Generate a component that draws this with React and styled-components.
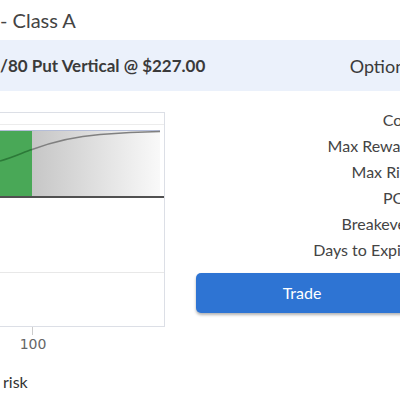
import React from "react";
import styled, { createGlobalStyle } from "styled-components";

const GlobalStyle = createGlobalStyle`
  html, body {
    margin: 0;
    padding: 0;
    overflow: hidden;
    background: #fff;
  }
  body {
    font-family: Lato, "Open Sans", sans-serif;
    color: #444;
  }
`;

const Page = styled.div`
  width: 430px;
`;

const Title = styled.h2`
  margin: 0;
  height: 40px;
  display: flex;
  align-items: center;
  font-size: 20px;
  font-weight: 400;
  color: #444;
`;

const Band = styled.div`
  height: 51px;
  display: flex;
  align-items: center;
  justify-content: space-between;
  background: #ebf1fb;
  color: #3a3a3a;
`;

const Strategy = styled.div`
  font-size: 17px;
  font-weight: 700;
`;

const BandLink = styled.div`
  font-size: 18px;
  padding-right: 17px;
`;

const Main = styled.div`
  display: grid;
  grid-template-columns: 165px 1fr;
  column-gap: 31px;
`;

const ChartCol = styled.div`
  padding-top: 21px;
`;

const ChartBox = styled.div`
  width: 164px;
  height: 213px;
  margin-left: -1px;
  border: 1px solid #dcdfe6;
  background: #fff;
  svg {
    display: block;
  }
`;

const Tick = styled.div`
  width: 1px;
  height: 8px;
  margin-left: 32px;
  background: #ccc;
`;

const TickLabel = styled.div`
  width: 40px;
  margin-left: 13px;
  text-align: center;
  font-family: "DejaVu Sans", sans-serif;
  font-size: 14px;
  line-height: 18px;
  color: #666;
`;

const Note = styled.div`
  margin-top: 19px;
  padding-left: 3px;
  font-size: 16px;
  line-height: 20px;
  color: #333;
`;

const SideCol = styled.div`
  padding-top: 16px;
  display: flex;
  flex-direction: column;
`;

const Stats = styled.div`
  display: flex;
  flex-direction: column;
  align-items: flex-end;
  padding-right: 15px;
`;

const StatLabel = styled.div`
  font-size: 16px;
  line-height: 26px;
  color: #444;
  white-space: nowrap;
`;

const TradeButton = styled.button`
  margin-top: 10px;
  width: 212px;
  height: 40px;
  padding: 0 0 2px;
  border: none;
  border-radius: 5px;
  background: #2e74d3;
  color: #fff;
  font-family: Lato, sans-serif;
  font-size: 16px;
  box-shadow: 0 2px 3px rgba(0, 0, 0, 0.3);
  cursor: pointer;
`;

const labels = ["Cost", "Max Reward", "Max Risk", "POP", "Breakeven", "Days to Expiry"];

const Chart = () => (
  <svg width="164" height="213" viewBox="0 0 164 213">
    <defs>
      <linearGradient id="loss" x1="0" x2="1" y1="0" y2="0">
        <stop offset="0" stopColor="#c6c6c6" />
        <stop offset="1" stopColor="#f9f9f9" />
      </linearGradient>
    </defs>
    <line x1="0" y1="11.5" x2="164" y2="11.5" stroke="#ececec" />
    <line x1="0" y1="159.5" x2="164" y2="159.5" stroke="#e8e8e8" />
    <rect x="0" y="17" width="32" height="67" fill="#49a857" />
    <rect x="32" y="17" width="128" height="67" fill="url(#loss)" />
    <line x1="0" y1="17.5" x2="160" y2="17.5" stroke="#b4bdd8" />
    <path d="M0 48 C 14 44, 24 39, 32 36.5" fill="none" stroke="#2c7a38" strokeWidth="1.6" />
    <path d="M32 36.5 C 55 28, 80 23, 100 21.5 C 125 19.5, 145 18.8, 160 18.5" fill="none" stroke="#808080" strokeWidth="1.6" />
    <line x1="0" y1="84" x2="164" y2="84" stroke="#505050" strokeWidth="2" />
  </svg>
);

const App = () => (
  <>
    <GlobalStyle />
    <Page>
      <Title>- Class A</Title>
      <Band>
        <Strategy>/80 Put Vertical @ $227.00</Strategy>
        <BandLink>Options</BandLink>
      </Band>
      <Main>
        <ChartCol>
          <ChartBox>
            <Chart />
          </ChartBox>
          <Tick />
          <TickLabel>100</TickLabel>
          <Note>risk</Note>
        </ChartCol>
        <SideCol>
          <Stats>
            {labels.map((l) => (
              <StatLabel key={l}>{l}</StatLabel>
            ))}
          </Stats>
          <TradeButton>Trade</TradeButton>
        </SideCol>
      </Main>
    </Page>
  </>
);

export default App;
